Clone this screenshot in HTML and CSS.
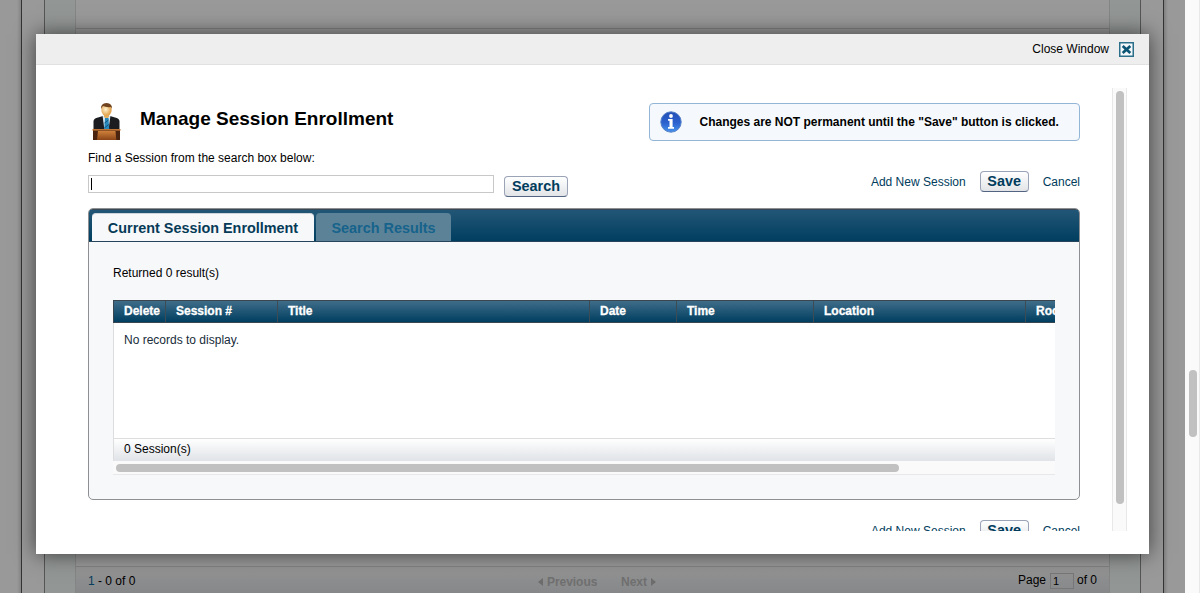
FILE: index.html
```html
<!DOCTYPE html>
<html lang="en">
<head>
<meta charset="utf-8">
<title>Manage Session Enrollment</title>
<link rel="stylesheet" href="styles.css">
</head>
<body>
<div class="page">
  <div class="gutter gutter-left"></div>
  <div class="band band-left"></div>
  <div class="side"></div>
  <main class="sheet">
    <div class="sheet-top"></div>
    <div class="sheet-body"></div>
    <div class="pager">
      <div class="pager-count"><span class="first">1</span> - 0 of 0</div>
      <div class="pager-nav">
        <svg width="5" height="10" viewBox="0 0 5 10"><path d="M5 1v8L0 5z"/></svg>
        <span class="prev">Previous</span>
        <span class="next">Next</span>
        <svg width="5" height="10" viewBox="0 0 5 10"><path d="M0 1v8l5-4z"/></svg>
      </div>
      <div class="pager-page"><span>Page</span><span class="page-box">1</span><span>of 0</span></div>
    </div>
  </main>
  <div class="side side-right"></div>
  <div class="band band-right"></div>
  <div class="gutter gutter-right"></div>
  <div class="page-scroll"><div class="page-thumb"></div></div>
</div>

<section class="modal">
  <header class="modal-head">
    <span>Close Window</span>
    <svg width="15" height="15" viewBox="0 0 15 15"><rect x=".75" y=".75" width="13.5" height="13.5" fill="#f4f8fa" stroke="#2c6f8b" stroke-width="1.5"/><path d="M3.700 3.900l7.600 7.200M11.300 3.900l-7.600 7.200" stroke="#0c5474" stroke-width="2.700"/></svg>
  </header>
  <div class="modal-body">
    <div class="content">
      <div class="title-row">
        <svg class="speaker" width="29" height="38" viewBox="0 0 29 38">
          <defs>
            <linearGradient id="wood" x2="0" y2="1"><stop stop-color="#cf813b"/><stop offset="1" stop-color="#8a4417"/></linearGradient>
            <radialGradient id="face" cx=".42" cy=".45"><stop stop-color="#fff3d0"/><stop offset="1" stop-color="#e4a551"/></radialGradient>
          </defs>
          <path d="M1.500 27V18q.5-3 4.500-3.500l5-1.500h7l5 1.500q4 .5 4.500 3.500v9z" fill="#1b1c20"/>
          <path d="M10.500 12.500h8L16.500 27h-4z" fill="#d9e8f1"/>
          <path d="M12 10h5v4l-2.500 2L12 14z" fill="#e5b062"/>
          <path d="M13 15h3.500l.8 12H12.200z" fill="#2889bd"/>
          <path d="M12.500 20l4-3M12.300 25l4.500-3.500" stroke="#11587f" stroke-width="1"/>
          <ellipse cx="14.500" cy="7" rx="5.200" ry="6" fill="url(#face)"/>
          <path d="M9 6Q8.500.5 14.500 0q6 .5 5.500 6l-1-2q-5 .5-8-1-1 1-2 3z" fill="#70421d"/>
          <path d="M1 27h27v10H1z" fill="#4b2410"/>
          <path d="M6 28h17.500l.8 9H5z" fill="url(#wood)"/>
          <path d="M.5 26h28v1.600H.5z" fill="#bd7333"/>
        </svg>
        <h1>Manage Session Enrollment</h1>
        <div class="notice">
          <svg width="22" height="22" viewBox="0 0 22 22">
            <defs><linearGradient id="info" x2="0" y2="1"><stop stop-color="#234fb4"/><stop offset=".55" stop-color="#2c62cf"/><stop offset="1" stop-color="#4693ec"/></linearGradient></defs>
            <circle cx="11" cy="11" r="10.200" fill="url(#info)" stroke="#5580c8" stroke-width="1"/>
            <circle cx="11" cy="5" r="1.900" fill="#fff"/>
            <path d="M8 8h4.600v8H14v1.800H8V16h1.500V9.800H8z" fill="#fff"/>
          </svg>
          <strong>Changes are NOT permanent until the "Save" button is clicked.</strong>
        </div>
      </div>
      <label class="hint">Find a Session from the search box below:</label>
      <div class="search-row">
        <div class="search-input"><i class="caret"></i></div>
        <button class="btn search-btn">Search</button>
        <div class="actions"><a>Add New Session</a><button class="btn save-btn">Save</button><a>Cancel</a></div>
      </div>
      <div class="panel">
        <nav class="tabs"><span class="tab active">Current Session Enrollment</span><span class="tab idle">Search Results</span></nav>
        <div class="panel-body">
          <p class="returned">Returned 0 result(s)</p>
          <div class="grid">
            <div class="grid-head"><span>Delete</span><span>Session #</span><span>Title</span><span>Date</span><span>Time</span><span>Location</span><span>Room</span></div>
            <div class="grid-body">No records to display.</div>
            <div class="grid-foot">0 Session(s)</div>
            <div class="grid-scroll"><div class="grid-thumb"></div></div>
          </div>
        </div>
      </div>
      <div class="actions actions-bottom"><a>Add New Session</a><button class="btn save-btn">Save</button><a>Cancel</a></div>
    </div>
    <div class="frame-scroll"><div class="frame-thumb"></div></div>
  </div>
</section>
</body>
</html>
```

FILE: styles.css
```css
* { box-sizing: border-box; }
body { margin: 0; width: 1200px; height: 593px; overflow: hidden; position: relative; font: 12px/14px "Liberation Sans", Arial, sans-serif; color: #000; }

/* Dimmed page behind the dialog */
.page { display: flex; height: 593px; background: #999; }
.gutter-left { width: 22px; border-right: 1px solid #333; background: linear-gradient(90deg, #999 17px, #858585 21px); }
.band-left { width: 23px; border-right: 1px solid #555; }
.side { width: 30px; background: #929694; }
.sheet { width: 1035px; border: solid #858585; border-width: 0 1px; display: flex; flex-direction: column; }
.sheet-top { height: 29px; border-bottom: 1px solid #808080; }
.sheet-body { flex: 1; }
.side-right { width: 30px; }
.band-right { width: 24px; border-left: 1px solid #555; border-right: 1px solid #333; }
.gutter-right { width: 21px; background: linear-gradient(90deg, #818181, #999 4px); }
.page-scroll { width: 15px; background: #fafafa; border-right: 1px solid #e8e8e8; padding: 370px 0 0 4px; }
.page-thumb { width: 8px; height: 67px; border-radius: 4px; background: #c1c1c1; }
.pager { height: 27px; border-top: 1px solid #828282; background: linear-gradient(#959595, #858789); display: grid; grid-template-columns: 450px 1fr 91px; grid-template-rows: 26px; padding-left: 12px; line-height: 28px; }
.first { color: #073d5b; }
.pager-nav { display: flex; align-items: center; font-weight: bold; color: #707070; padding-top: 3px; }
.pager-nav svg { fill: #6d6d6d; }
.prev { margin-left: 4px; width: 74px; letter-spacing: -.05px; }
.next { width: 30px; }
.pager-page { display: flex; align-items: center; }
.page-box { width: 24px; height: 16px; border: 1px solid #777; margin: 2px 3px 0 4px; padding-left: 2px; line-height: 15px; font-size: 11px; }

/* Dialog */
.modal { position: absolute; left: 36px; top: 34px; width: 1113px; height: 520px; background: #fff; box-shadow: 0 0 20px rgba(0,0,0,.6); }
.modal-head { height: 31px; background: #eee; border-bottom: 1px solid #e1e1e1; display: flex; justify-content: flex-end; align-items: center; gap: 10px; padding-right: 15px; }
.modal-body { height: 466px; overflow: hidden; display: flex; padding: 23px 22px 0 52px; }
.content { width: 992px; height: 443px; margin-right: 32px; overflow: hidden; }
.frame-scroll { width: 15px; height: 443px; border: solid #e8e8e8; border-width: 0 1px; background: #fafafa; padding: 3px 0 0 3px; }
.frame-thumb { width: 8px; height: 413px; border-radius: 4px; background: #c1c1c1; }
.title-row { display: flex; height: 62px; padding-top: 15px; }
.speaker { margin-left: 4px; }
h1 { margin: 5px 0 0 19px; width: 509px; font-size: 19px; line-height: 22px; white-space: nowrap; }
.notice { width: 431px; height: 38px; border: 1px solid #93b5d6; border-radius: 4px; background: #f5f9fd; display: flex; align-items: center; gap: 18px; padding-left: 9.5px; white-space: nowrap; }
.hint { display: block; height: 20px; padding-top: 1px; }
.search-row { display: flex; height: 38px; }
.search-input { width: 406px; height: 18px; margin-top: 5px; border: 1px solid #c8c8c8; padding: 2px; }
.caret { display: block; width: 1px; height: 12px; background: #000; }
.btn { font: bold 14.4px/17px "Liberation Sans", Arial, sans-serif; color: #003c5c; background: linear-gradient(#fff, #e2e4e7); border: 1px solid #9ba3b7; border-bottom-color: #526482; border-radius: 4px; padding: 0 0 1px; height: 21px; }
.search-btn { width: 64px; margin: 6px 0 0 10px; }
.save-btn { width: 49px; margin: 0 14px; }
.actions { display: flex; height: 21px; margin: 1px 0 0 auto; color: #003c5c; line-height: 22px; justify-content: flex-end; }
.panel { height: 292px; border: 1px solid #8e8f92; border-radius: 5px; background: #f7f8fa; overflow: hidden; }
.tabs { height: 33px; border-top: 1px solid #384955; border-bottom: 1px solid #27445d; background: linear-gradient(#235676, #003e60); display: flex; padding: 3px 0 0 3px; gap: 2px; }
.tab { height: 28px; border-radius: 4px 4px 0 0; font: bold 14.4px/30px "Liberation Sans", Arial, sans-serif; text-align: center; white-space: nowrap; }
.active { width: 222px; background: #f7f8fa; color: #063b58; border-top: 1px solid #d0d5dc; line-height: 28px; }
.idle { width: 135px; background: #5c8298; color: #16638b; }
.panel-body { padding: 23px 24px 0; }
.returned { margin: 0; height: 35px; padding-top: 1px; }
.grid { width: 942px; overflow: hidden; }
.grid-head { width: 1100px; height: 23px; border: 1px solid #394650; background: linear-gradient(#3f6d89, #003e60); display: grid; grid-template-columns: 52px 112px 312px 87px 137px 212px 1fr; color: #fff; font-weight: bold; line-height: 20px; -webkit-text-stroke: .3px #fff; }
.grid-head span { padding-left: 10px; border-right: 1px solid #3d4b54; }
.grid-body { height: 115px; background: #fff; border-left: 1px solid #ddd; padding: 10px; color: #182c3b; }
.grid-foot { height: 23px; border-top: 1px solid #dedede; border-left: 1px solid #ddd; border-bottom: 1px solid #e1e4e8; background: linear-gradient(#fff, #e1e4e8); padding-left: 10px; line-height: 20px; }
.grid-scroll { height: 14px; background: #fafafa; border-bottom: 1px solid #e8e8e8; padding: 3px; }
.grid-thumb { width: 783px; height: 8px; border-radius: 4px; background: #c1c1c1; }
.actions-bottom { margin-top: 20px; }
```
